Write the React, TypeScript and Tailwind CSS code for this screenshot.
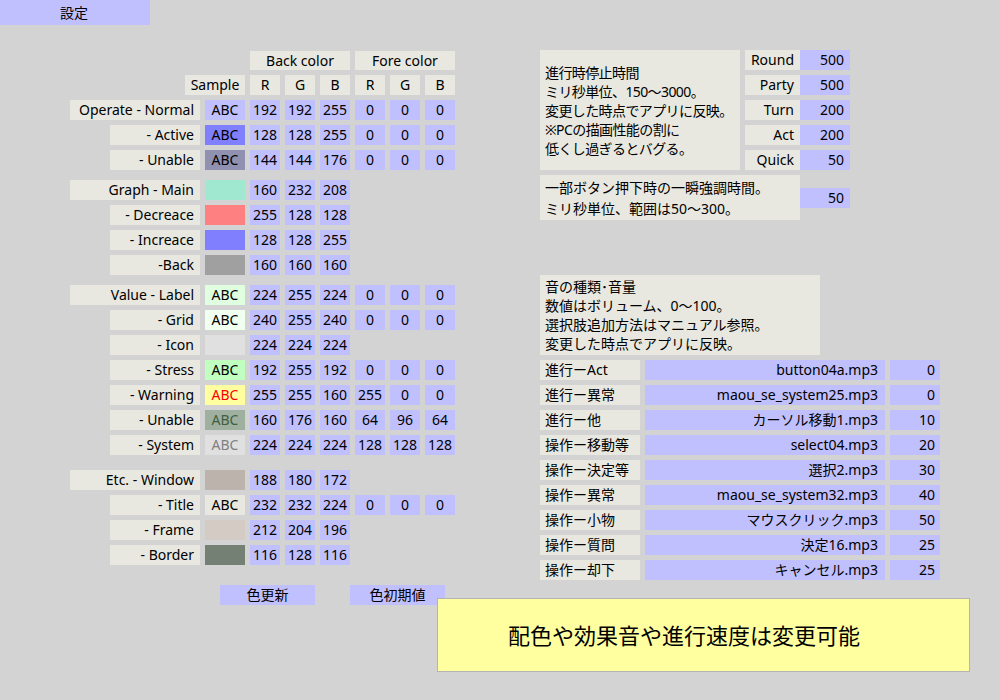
import React from 'react'

type ColorRow = {
  label: string
  sub: boolean
  space: string
  back: [number, number, number]
  fore?: [number, number, number]
  text: boolean
}

const colorRows: ColorRow[] = [
  { label: 'Operate - Normal', sub: false, space: '', back: [192, 192, 255], fore: [0, 0, 0], text: true },
  { label: '- Active', sub: true, space: '', back: [128, 128, 255], fore: [0, 0, 0], text: true },
  { label: '- Unable', sub: true, space: '', back: [144, 144, 176], fore: [0, 0, 0], text: true },
  { label: 'Graph - Main', sub: false, space: 'mt-[5px]', back: [160, 232, 208], text: false },
  { label: '- Decreace', sub: true, space: '', back: [255, 128, 128], text: false },
  { label: '- Increace', sub: true, space: '', back: [128, 128, 255], text: false },
  { label: '-Back', sub: true, space: '', back: [160, 160, 160], text: false },
  { label: 'Value - Label', sub: false, space: 'mt-[5px]', back: [224, 255, 224], fore: [0, 0, 0], text: true },
  { label: '- Grid', sub: true, space: '', back: [240, 255, 240], fore: [0, 0, 0], text: true },
  { label: '- Icon', sub: true, space: '', back: [224, 224, 224], text: false },
  { label: '- Stress', sub: true, space: '', back: [192, 255, 192], fore: [0, 0, 0], text: true },
  { label: '- Warning', sub: true, space: '', back: [255, 255, 160], fore: [255, 0, 0], text: true },
  { label: '- Unable', sub: true, space: '', back: [160, 176, 160], fore: [64, 96, 64], text: true },
  { label: '- System', sub: true, space: '', back: [224, 224, 224], fore: [128, 128, 128], text: true },
  { label: 'Etc. - Window', sub: false, space: 'mt-[10px]', back: [188, 180, 172], text: false },
  { label: '- Title', sub: true, space: '', back: [232, 232, 224], fore: [0, 0, 0], text: true },
  { label: '- Frame', sub: true, space: '', back: [212, 204, 196], text: false },
  { label: '- Border', sub: true, space: '', back: [116, 128, 116], text: false },
]

const speeds = [
  { name: 'Round', value: 500 },
  { name: 'Party', value: 500 },
  { name: 'Turn', value: 200 },
  { name: 'Act', value: 200 },
  { name: 'Quick', value: 50 },
]

const sounds = [
  { name: '進行ーAct', file: 'button04a.mp3', vol: 0 },
  { name: '進行ー異常', file: 'maou_se_system25.mp3', vol: 0 },
  { name: '進行ー他', file: 'カーソル移動1.mp3', vol: 10 },
  { name: '操作ー移動等', file: 'select04.mp3', vol: 20 },
  { name: '操作ー決定等', file: '選択2.mp3', vol: 30 },
  { name: '操作ー異常', file: 'maou_se_system32.mp3', vol: 40 },
  { name: '操作ー小物', file: 'マウスクリック.mp3', vol: 50 },
  { name: '操作ー質問', file: '決定16.mp3', vol: 25 },
  { name: '操作ー却下', file: 'キャンセル.mp3', vol: 25 },
]

const rgb = (c: [number, number, number]) => `rgb(${c[0]}, ${c[1]}, ${c[2]})`

const Cell: React.FC<{ children?: React.ReactNode }> = ({ children }) => (
  <div className="w-[30px] h-[20px] bg-[#c0c0ff] text-center leading-[20px]">{children}</div>
)

const App: React.FC = () => {
  return (
    <div
      className="relative w-[1000px] h-[700px] bg-[#d3d3d3] text-[14px] text-black overflow-hidden"
      style={{ fontFamily: '"Noto Sans", "Noto Sans CJK JP", sans-serif' }}
    >
      {/* Tab */}
      <div className="w-[150px] h-[25px] bg-[#c0c0ff] text-center leading-[25px] pr-[2px]">設定</div>

      <div className="flex mt-[25px]">
        {/* Colour table */}
        <div className="ml-[70px] w-[385px] flex flex-col gap-[5px]">
          <div className="flex gap-[5px] ml-[180px] mt-[1px] h-[19px]">
            <div className="w-[100px] h-[19px] bg-[#e8e8e0] text-center leading-[19px]">Back color</div>
            <div className="w-[100px] h-[19px] bg-[#e8e8e0] text-center leading-[19px]">Fore color</div>
          </div>
          <div className="flex gap-[5px]">
            <div className="w-[60px] h-[20px] ml-[115px] bg-[#e8e8e0] text-center leading-[20px]">Sample</div>
            {['R', 'G', 'B', 'R', 'G', 'B'].map((c, i) => (
              <div key={i} className="w-[30px] h-[20px] bg-[#e8e8e0] text-center leading-[20px]">{c}</div>
            ))}
          </div>

          {colorRows.map((row, i) => (
            <div key={i} className={`flex gap-[5px] ${row.space}`}>
              <div className="w-[130px] flex justify-end">
                <div
                  className={`${row.sub ? 'w-[90px]' : 'w-[130px]'} h-[20px] bg-[#e8e8e0] text-right pr-[6px] leading-[20px] whitespace-nowrap`}
                >
                  {row.label}
                </div>
              </div>
              <div
                className="w-[40px] h-[20px] text-center leading-[20px]"
                style={{ backgroundColor: rgb(row.back), color: row.fore ? rgb(row.fore) : undefined }}
              >
                {row.text ? 'ABC' : ''}
              </div>
              {row.back.map((v, j) => (
                <Cell key={`b${j}`}>{v}</Cell>
              ))}
              {row.fore && row.fore.map((v, j) => <Cell key={`f${j}`}>{v}</Cell>)}
            </div>
          ))}

          <div className="flex mt-[15px] ml-[150px] gap-[35px]">
            <div className="w-[95px] h-[20px] bg-[#c0c0ff] text-center leading-[20px]">色更新</div>
            <div className="w-[95px] h-[20px] bg-[#c0c0ff] text-center leading-[20px]">色初期値</div>
          </div>
        </div>

        {/* Right side */}
        <div className="ml-[85px] flex flex-col">
          <div className="flex gap-[5px]">
            <div className="w-[200px] h-[120px] bg-[#e8e8e0] px-[5px] flex flex-col justify-center leading-[19px] whitespace-nowrap tracking-[-0.6px]">
              <div>進行時停止時間</div>
              <div>ミリ秒単位、150～3000。</div>
              <div>変更した時点でアプリに反映。</div>
              <div>※PCの描画性能の割に</div>
              <div>低くし過ぎるとバグる。</div>
            </div>
            <div className="flex flex-col gap-[5px]">
              {speeds.map((s) => (
                <div key={s.name} className="flex h-[20px] leading-[20px]">
                  <div className="w-[55px] bg-[#e8e8e0] text-right pr-[6px]">{s.name}</div>
                  <div className="w-[50px] bg-[#c0c0ff] text-right pr-[6px]">{s.value}</div>
                </div>
              ))}
            </div>
          </div>

          <div className="flex items-center mt-[5px]">
            <div className="w-[260px] h-[45px] bg-[#e8e8e0] px-[5px] flex flex-col justify-center leading-[21px] whitespace-nowrap">
              <div>一部ボタン押下時の一瞬強調時間。</div>
              <div>ミリ秒単位、範囲は50～300。</div>
            </div>
            <div className="w-[50px] h-[20px] bg-[#c0c0ff] text-right pr-[6px] leading-[20px]">50</div>
          </div>

          <div className="w-[280px] h-[80px] mt-[55px] bg-[#e8e8e0] px-[5px] flex flex-col justify-center leading-[19px] whitespace-nowrap">
            <div>音の種類･音量</div>
            <div>数値はボリューム、0～100。</div>
            <div>選択肢追加方法はマニュアル参照。</div>
            <div>変更した時点でアプリに反映。</div>
          </div>

          <div className="flex flex-col gap-[5px] mt-[5px]">
            {sounds.map((s) => (
              <div key={s.name} className="flex gap-[5px] h-[20px] leading-[20px]">
                <div className="w-[100px] bg-[#e8e8e0] pl-[5px] whitespace-nowrap">{s.name}</div>
                <div className="w-[240px] bg-[#c0c0ff] text-right pr-[7px] whitespace-nowrap">{s.file}</div>
                <div className="w-[50px] bg-[#c0c0ff] text-right pr-[5px]">{s.vol}</div>
              </div>
            ))}
          </div>
        </div>
      </div>

      {/* Floating note */}
      <div className="absolute left-[437px] top-[598px] w-[533px] h-[74px] bg-[#ffffa0] border border-[#b4b4b4] flex items-center pl-[70px] text-[22px]">
        配色や効果音や進行速度は変更可能
      </div>
    </div>
  )
}

export default App
